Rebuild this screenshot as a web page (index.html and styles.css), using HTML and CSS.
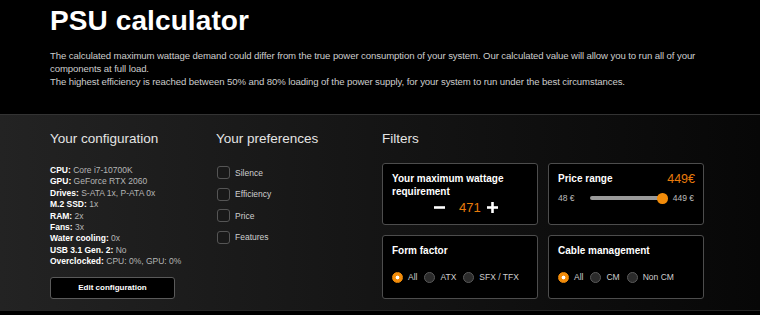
FILE: index.html
```html
<!DOCTYPE html>
<html lang="en">
<head>
<meta charset="utf-8">
<title>PSU calculator</title>
<link rel="stylesheet" href="styles.css">
</head>
<body>
<header class="intro">
  <h1 class="title">PSU calculator</h1>
  <p class="lead">The calculated maximum wattage demand could differ from the true power consumption of your system. Our calculated value will allow you to run all of your components at full load.<br>The highest efficiency is reached between 50% and 80% loading of the power supply, for your system to run under the best circumstances.</p>
</header>
<section class="calc">
  <div class="calc-inner">
    <div class="col col-config">
      <h2 class="col-title">Your configuration</h2>
      <ul class="spec-list">
        <li><b>CPU:</b> Core i7-10700K</li>
        <li><b>GPU:</b> GeForce RTX 2060</li>
        <li><b>Drives:</b> S-ATA 1x, P-ATA 0x</li>
        <li><b>M.2 SSD:</b> 1x</li>
        <li><b>RAM:</b> 2x</li>
        <li><b>Fans:</b> 3x</li>
        <li><b>Water cooling:</b> 0x</li>
        <li><b>USB 3.1 Gen. 2:</b> No</li>
        <li><b>Overclocked:</b> CPU: 0%, GPU: 0%</li>
      </ul>
      <button class="edit-btn" type="button">Edit configuration</button>
    </div>
    <div class="col col-prefs">
      <h2 class="col-title">Your preferences</h2>
      <ul class="pref-list">
        <li><span class="checkbox"></span>Silence</li>
        <li><span class="checkbox"></span>Efficiency</li>
        <li><span class="checkbox"></span>Price</li>
        <li><span class="checkbox"></span>Features</li>
      </ul>
    </div>
    <div class="col col-filters">
      <h2 class="col-title">Filters</h2>
      <div class="filter-grid">
        <div class="fbox">
          <div class="fbox-title">Your maximum wattage requirement</div>
          <div class="stepper">
            <svg class="step-icon" viewBox="0 0 12 12" width="11" height="11"><rect x="0" y="4.6" width="12" height="2.8" fill="#fff"/></svg>
            <span class="watt">471</span>
            <svg class="step-icon" viewBox="0 0 12 12" width="11" height="11"><rect x="0" y="4.6" width="12" height="2.8" fill="#fff"/><rect x="4.6" y="0" width="2.8" height="12" fill="#fff"/></svg>
          </div>
        </div>
        <div class="fbox">
          <div class="fbox-head">
            <div class="fbox-title">Price range</div>
            <div class="price">449€</div>
          </div>
          <div class="slider-row">
            <span class="slider-label">48 €</span>
            <div class="slider"><span class="slider-track"></span><span class="slider-thumb"></span></div>
            <span class="slider-label">449 €</span>
          </div>
        </div>
        <div class="fbox">
          <div class="fbox-title">Form factor</div>
          <div class="radios">
            <span class="radio checked"></span><span class="rlabel">All</span>
            <span class="radio"></span><span class="rlabel">ATX</span>
            <span class="radio"></span><span class="rlabel">SFX / TFX</span>
          </div>
        </div>
        <div class="fbox">
          <div class="fbox-title">Cable management</div>
          <div class="radios">
            <span class="radio checked"></span><span class="rlabel">All</span>
            <span class="radio"></span><span class="rlabel">CM</span>
            <span class="radio"></span><span class="rlabel">Non CM</span>
          </div>
        </div>
      </div>
    </div>
  </div>
</section>
</body>
</html>
```

FILE: styles.css
```css
* { box-sizing: border-box; }
html, body {
  margin: 0;
  padding: 0;
  background: #000;
  color: #fff;
  font-family: "Liberation Sans", Arial, sans-serif;
}
.intro {
  padding: 5px 50px 0 50px;
  height: 114px;
}
.title {
  margin: 0;
  font-size: 28px;
  line-height: 32px;
  font-weight: 700;
  color: #fff;
  letter-spacing: 0.1px;
}
.lead {
  margin: 12px 0 0 0;
  width: 660px;
  font-size: 9.6px;
  line-height: 13px;
  letter-spacing: -0.1px;
  color: #cdcdcd;
}
.calc {
  border-top: 1px solid #333;
  border-bottom: 1px solid #262626;
  background: linear-gradient(90deg, #232323 0%, #161616 45%, #070707 100%);
  height: 197px;
}
.calc-inner {
  display: grid;
  grid-template-columns: 166px 166px 322px;
  padding: 16px 0 0 50px;
}
.col-title {
  margin: 0;
  font-size: 13.5px;
  line-height: 16px;
  font-weight: 400;
  color: #e4e4e4;
}
.spec-list {
  list-style: none;
  margin: 18px 0 0 0;
  padding: 0;
  font-size: 8.5px;
  line-height: 11.4px;
  color: #b5b5b5;
}
.spec-list b { color: #fff; font-weight: 700; }
.edit-btn {
  margin-top: 9px;
  width: 125px;
  height: 22px;
  background: #000;
  border: 1px solid #5a5a5a;
  border-radius: 3px;
  color: #fff;
  font-family: "Liberation Sans", Arial, sans-serif;
  font-size: 8px;
  font-weight: 700;
  padding: 0;
}
.pref-list {
  list-style: none;
  margin: 19px 0 0 1px;
  padding: 0;
  display: flex;
  flex-direction: column;
  gap: 8.5px;
  font-size: 8.5px;
  color: #cfcfcf;
}
.pref-list li {
  display: flex;
  align-items: center;
  gap: 5px;
  height: 13px;
}
.checkbox {
  width: 13px;
  height: 13px;
  border: 1px solid #555;
  border-radius: 3px;
  background: #191919;
}
.filter-grid {
  margin-top: 16px;
  display: grid;
  grid-template-columns: 156px 156px;
  grid-template-rows: 62px 64px;
  gap: 10px;
}
.fbox {
  border: 1px solid #4d4d4d;
  border-radius: 3px;
  background: #000;
  padding: 8px 9px 0 9px;
}
.fbox-title {
  font-size: 10px;
  line-height: 13px;
  font-weight: 700;
  color: #fff;
}
.stepper {
  display: flex;
  align-items: center;
  margin-top: 2px;
  padding-left: 42px;
  height: 14px;
}
.watt {
  color: #e87b0c;
  font-size: 13px;
  margin: 0 6px 0 14px;
}
.fbox-head {
  display: flex;
  justify-content: space-between;
  align-items: flex-start;
}
.price {
  color: #e87b0c;
  font-size: 12.5px;
  line-height: 15px;
  margin-right: -1px;
}
.slider-row {
  display: flex;
  align-items: center;
  margin-top: 5px;
  height: 12px;
}
.slider-label {
  font-size: 8.5px;
  color: #bdbdbd;
}
.slider {
  position: relative;
  flex: 1;
  margin: 0 10px 0 15px;
  height: 12px;
  display: flex;
  align-items: center;
}
.slider-track {
  width: 100%;
  height: 4px;
  border-radius: 2px;
  background: #9a9a9a;
}
.slider-thumb {
  position: absolute;
  right: -5px;
  top: 1px;
  width: 10.5px;
  height: 10.5px;
  border-radius: 50%;
  background: #f28c0a;
}
.radios {
  display: flex;
  align-items: center;
  margin-top: 14px;
  height: 12px;
  font-size: 8.5px;
  color: #cfcfcf;
}
.radio {
  width: 11px;
  height: 11px;
  border-radius: 50%;
  border: 1px solid #5a5a5a;
  background: #2b2b2b;
  margin-right: 5px;
  flex: none;
}
.radio.checked {
  border-color: #f28c0a;
  background: radial-gradient(circle, #fff 0 1.6px, #f28c0a 2.2px);
}
.rlabel { margin-right: 7px; }
```
